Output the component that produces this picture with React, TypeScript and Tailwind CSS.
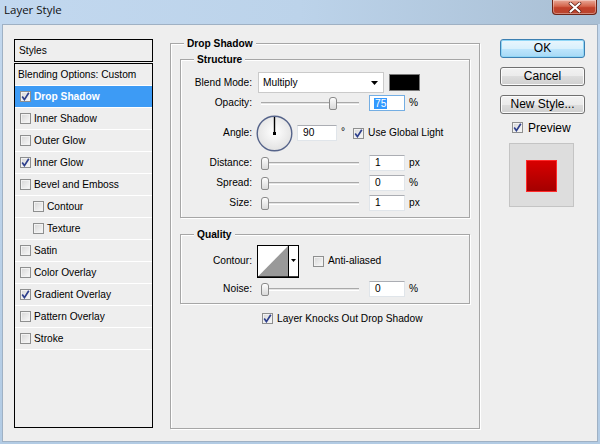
import React from "react";

const sans = "font-['Liberation_Sans',Arial,sans-serif]";

function CheckBox({ on = false }: { on?: boolean }) {
  return (
    <span className="flex h-[11px] w-[11px] shrink-0 items-center justify-center border border-[#8e8f8f] bg-gradient-to-br from-[#d6d6d6] to-[#fafafa] shadow-[inset_0_0_0_1px_#f2f2f2]">
      {on && (
        <svg width="9" height="9" viewBox="0 0 9 9">
          <path d="M1.2 4.6 L3.4 7.6 L7.8 0.8" stroke="#2d3f8c" strokeWidth="1.7" fill="none" />
        </svg>
      )}
    </span>
  );
}

function Slider({ thumb }: { thumb: string }) {
  return (
    <div className="relative h-[16px] w-[98px] shrink-0">
      <div className="absolute left-0 right-0 top-[7px] h-[3px] border-t border-b border-t-[#a9a9a9] border-b-white bg-[#e4e4e4]" />
      <div
        className={`absolute top-[2px] h-[13px] w-[8px] rounded-t-[3px] rounded-b-[2px] border border-[#8a8a8a] bg-gradient-to-b from-[#fdfdfd] to-[#d9d9d9] ${thumb}`}
      />
    </div>
  );
}

function Field({ value, focus = false, width = "w-[36px]", ml = "ml-[10px]" }: { value: string; focus?: boolean; width?: string; ml?: string }) {
  return (
    <div
      className={`flex h-[16px] shrink-0 items-center bg-white pl-[4px] ${width} ${ml} ${
        focus ? "border border-[#74aee3]" : "border border-[#e0e5ea] border-t-[#abadb3]"
      }`}
    >
      {focus ? (
        <span className="bg-[#3399ff] px-[1px] leading-[11px] text-white">{value}</span>
      ) : (
        <span className="px-[1px]">{value}</span>
      )}
    </div>
  );
}

function SliderRow({ label, thumb, value, unit, mt, focus }: { label: string; thumb: string; value: string; unit: string; mt: string; focus?: boolean }) {
  return (
    <div className={`flex h-[16px] items-center ${mt}`}>
      <div className="w-[71px] shrink-0 text-right">{label}</div>
      <div className="ml-[9px]">
        <Slider thumb={thumb} />
      </div>
      <Field value={value} focus={focus} />
      <span className="ml-[4px]">{unit}</span>
    </div>
  );
}

function Group({ title, className, children }: { title: string; className: string; children?: React.ReactNode }) {
  return (
    <div className={`border border-[#a6a6a6] shadow-[1px_1px_0_#fff,inset_1px_1px_0_#fff] ${className}`}>
      <div className="-mt-[7px] ml-[13px] w-fit bg-[#eeeeee] px-[3px] font-bold leading-[13px]">{title}</div>
      {children}
    </div>
  );
}

const styleRows = [
  { label: "Drop Shadow", on: true, sel: true },
  { label: "Inner Shadow" },
  { label: "Outer Glow" },
  { label: "Inner Glow", on: true },
  { label: "Bevel and Emboss" },
  { label: "Contour", sub: true },
  { label: "Texture", sub: true },
  { label: "Satin" },
  { label: "Color Overlay" },
  { label: "Gradient Overlay", on: true },
  { label: "Pattern Overlay" },
  { label: "Stroke" },
];

function Arrow() {
  return (
    <svg width="7" height="4" viewBox="0 0 7 4">
      <polygon points="0,0 7,0 3.5,4" fill="#000" />
    </svg>
  );
}

export default function App() {
  return (
    <div className={`flex h-[444px] w-[600px] flex-col overflow-hidden bg-gradient-to-b from-[#c3d8ee] to-[#b2cbe4] text-black ${sans}`}>
      {/* title bar */}
      <div className="flex h-[24px] shrink-0 items-start bg-gradient-to-r from-[#c2d8ef] via-[#bcd3ea] to-[#a9bfd4]">
        <span className="pl-[4px] pt-[2px] font-['Open_Sans',sans-serif] text-[11.5px] leading-[16px] text-[#111]">Layer Style</span>
        <div className="flex-1" />
        <div className="mr-[3px] flex h-[15px] w-[45px] items-center justify-center rounded-b-[4px] border border-t-0 border-[#6e2416] bg-[linear-gradient(#e9a998_0%,#d4654c_45%,#c2412a_55%,#b8452f_100%)] shadow-[inset_0_0_0_1px_rgba(255,255,255,0.35)]">
          <svg width="14" height="11" viewBox="0 0 14 11">
            <path d="M2.5 1.5 L11.5 9.5 M11.5 1.5 L2.5 9.5" stroke="#5a1a10" strokeWidth="3.6" strokeLinecap="round" />
            <path d="M2.5 1.5 L11.5 9.5 M11.5 1.5 L2.5 9.5" stroke="#ffffff" strokeWidth="2.2" strokeLinecap="round" />
          </svg>
        </div>
      </div>

      {/* client area */}
      <div className="mx-[2px] mb-[2px] flex flex-1 items-start border border-[#9fb1c4] bg-[#eeeeee] text-[10.2px]">
        {/* styles list */}
        <div className="ml-[11px] mt-[14px] flex w-[139px] shrink-0 flex-col">
          <div className="flex h-[23px] items-center border border-black pl-[4px]">Styles</div>
          <div className="mt-[1px] h-[365px] border border-black">
            <div className="flex h-[22px] items-center border-b border-white pl-[3px]">Blending Options: Custom</div>
            {styleRows.map((r) => (
              <div
                key={r.label}
                className={`flex h-[22px] items-center gap-[3px] border-b border-white ${r.sub ? "pl-[18px]" : "pl-[5px]"} ${
                  r.sel ? "bg-[#3d9bf5] font-bold text-white" : ""
                }`}
              >
                <CheckBox on={r.on} />
                <span>{r.label}</span>
              </div>
            ))}
          </div>
        </div>

        {/* Drop Shadow group */}
        <Group title="Drop Shadow" className="ml-[17px] mt-[18px] h-[386px] w-[310px] shrink-0">
          <Group title="Structure" className="ml-[9px] mt-[9px] w-[290px] pb-[6px]">
            <div className="mt-[6px] flex h-[21px] items-center">
              <div className="w-[71px] shrink-0 text-right">Blend Mode:</div>
              <div className="ml-[6px] flex h-[21px] w-[126px] items-center justify-between border border-[#cacaca] bg-white pl-[4px] pr-[5px]">
                <span>Multiply</span>
                <Arrow />
              </div>
              <div className="ml-[5px] h-[17px] w-[31px] border border-[#7a7a7a] bg-black" />
            </div>
            <SliderRow label="Opacity:" thumb="left-[68px]" value="75" unit="%" mt="mt-[2px]" focus />
            <div className="mt-[4px] flex h-[36px] items-center">
              <div className="w-[71px] shrink-0 text-right">Angle:</div>
              <svg className="ml-[4px] shrink-0" width="37" height="37" viewBox="0 0 37 37">
                <defs>
                  <radialGradient id="dial" cx="50%" cy="45%" r="55%">
                    <stop offset="0%" stopColor="#ffffff" />
                    <stop offset="100%" stopColor="#e2e2e2" />
                  </radialGradient>
                </defs>
                <circle cx="18.5" cy="18.5" r="17.3" fill="url(#dial)" stroke="#56648a" strokeWidth="1.4" />
                <line x1="18.5" y1="18.5" x2="18.5" y2="2" stroke="#000" strokeWidth="1.4" />
                <rect x="17" y="17" width="3" height="3" fill="#000" />
              </svg>
              <Field value="90" width="w-[40px]" ml="ml-[4px]" />
              <span className="ml-[4px] self-start pt-[9px]">°</span>
              <div className="ml-[8px]">
                <CheckBox on />
              </div>
              <span className="ml-[4px]">Use Global Light</span>
            </div>
            <SliderRow label="Distance:" thumb="left-0" value="1" unit="px" mt="mt-[4px]" />
            <SliderRow label="Spread:" thumb="left-0" value="0" unit="%" mt="mt-[4px]" />
            <SliderRow label="Size:" thumb="left-0" value="1" unit="px" mt="mt-[4px]" />
          </Group>

          <Group title="Quality" className="ml-[9px] mt-[16px] w-[290px] pb-[6px]">
            <div className="mt-[4px] flex h-[32px] items-center">
              <div className="w-[71px] shrink-0 text-right">Contour:</div>
              <svg className="ml-[5px] shrink-0" width="42" height="33" viewBox="0 0 42 33">
                <rect x="0.5" y="0.5" width="41" height="32" fill="#fff" stroke="#000" />
                <polygon points="1,31.5 31,1 31,31.5" fill="#999999" />
                <line x1="31.5" y1="1" x2="31.5" y2="32" stroke="#000" />
                <line x1="0" y1="32" x2="42" y2="32" stroke="#000" strokeWidth="1.5" />
                <polygon points="34,14 39,14 36.5,17" fill="#000" />
              </svg>
              <div className="ml-[14px]">
                <CheckBox />
              </div>
              <span className="ml-[4px]">Anti-aliased</span>
            </div>
            <SliderRow label="Noise:" thumb="left-0" value="0" unit="%" mt="mt-[4px]" />
          </Group>

          <div className="ml-[91px] mt-[8px] flex h-[13px] items-center gap-[4px]">
            <CheckBox on />
            <span>Layer Knocks Out Drop Shadow</span>
          </div>
        </Group>

        {/* buttons */}
        <div className="ml-[20px] mt-[14px] flex w-[85px] shrink-0 flex-col text-[12px]">
          <button className="h-[19px] w-[85px] rounded-[3px] border border-[#3c7fb1] bg-[linear-gradient(#eaf6fd_0%,#d9f0fc_50%,#bee6fd_50%,#a7d9f5_100%)] leading-[17px] shadow-[inset_0_0_0_1px_#8fd6f6]">
            OK
          </button>
          <button className="mt-[9px] h-[19px] w-[85px] rounded-[3px] border border-[#707070] bg-[linear-gradient(#f2f2f2_0%,#ebebeb_50%,#dddddd_50%,#cfcfcf_100%)] leading-[17px] shadow-[inset_0_0_0_1px_#fbfbfb]">
            Cancel
          </button>
          <button className="mt-[9px] h-[19px] w-[85px] rounded-[3px] border border-[#707070] bg-[linear-gradient(#f2f2f2_0%,#ebebeb_50%,#dddddd_50%,#cfcfcf_100%)] leading-[17px] shadow-[inset_0_0_0_1px_#fbfbfb]">
            New Style...
          </button>
          <div className="ml-[12px] mt-[7px] flex h-[13px] items-center gap-[5px]">
            <CheckBox on />
            <span>Preview</span>
          </div>
          <div className="ml-[9px] mt-[9px] flex h-[64px] w-[65px] items-center justify-center border border-[#c4c4c4] bg-[#dddddd]">
            <div className="mt-[1px] h-[32px] w-[31px] border border-[#ff2a2a] bg-gradient-to-b from-[#d80000] to-[#a40000]" />
          </div>
        </div>
      </div>
    </div>
  );
}
